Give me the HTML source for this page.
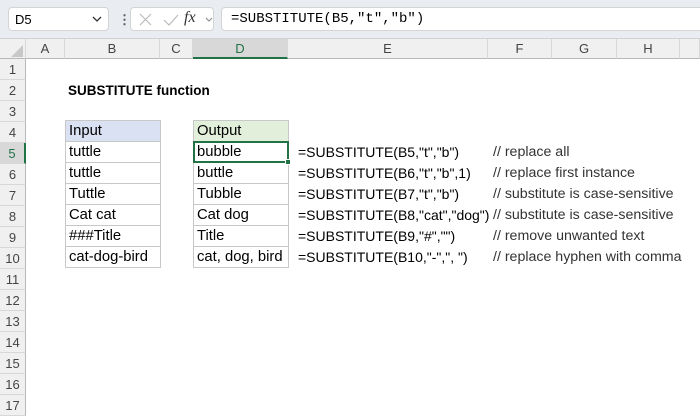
<!DOCTYPE html>
<html><head><style>
*{margin:0;padding:0;box-sizing:border-box}
body{width:700px;height:400px;overflow:hidden;background:#fff;font-family:"Liberation Sans",Arial,sans-serif;position:relative}
.bar{position:absolute;left:0;top:0;width:700px;height:39px;background:#e9edf2;border-bottom:1px solid #d0d0d0}
.box{position:absolute;background:#fff;border:1px solid #d4d4d4;border-radius:4px}
.ch{position:absolute;top:39px;height:20px;background:#f0f0f0;border-bottom:1px solid #b8b8b8;border-right:1px solid #d8d8d8;font-size:13px;color:#444;text-align:center;line-height:20px}
.rh{position:absolute;left:0;width:26px;height:21px;background:#f0f0f0;border-right:1px solid #b8b8b8;border-bottom:1px solid #d8d8d8;font-size:13px;color:#444;text-align:center;line-height:21px}
.c{position:absolute;height:22px;font-size:14.8px;line-height:22px;padding-left:3px;color:#000;white-space:nowrap}
.f{font-size:14px}
.m{font-size:14.2px;color:#333}
.b{border:1px solid #c8c8c8;line-height:21px}
</style></head><body>
<div class="bar"></div>
<div class="box" style="left:8px;top:7px;width:101px;height:24px"></div>
<div style="position:absolute;left:15px;top:12px;font-size:13px">D5</div>
<svg style="position:absolute;left:92px;top:16px" width="10" height="6"><path d="M1 1L5 5L9 1" fill="none" stroke="#333" stroke-width="1.3"/></svg>
<div style="position:absolute;left:118px;top:12px;font-size:13px;color:#555;font-weight:bold">⋮</div>
<div class="box" style="left:130px;top:7px;width:84px;height:24px"></div>
<svg style="position:absolute;left:136px;top:12px" width="80" height="16"><path d="M4 2L15 13M15 2L4 13" stroke="#bbb" stroke-width="1.2"/><path d="M28 8L33 13L42 3" fill="none" stroke="#bbb" stroke-width="1.2"/><path d="M70 6L73 9L76 6" fill="none" stroke="#888" stroke-width="1"/></svg>
<div style="position:absolute;left:184px;top:9px;font-family:'Liberation Serif',serif;font-style:italic;font-size:16px;color:#333">fx</div>
<div class="box" style="left:221px;top:7px;width:485px;height:24px"></div>
<div style="position:absolute;left:231px;top:11px;font-family:'Liberation Mono',monospace;font-size:14px">=SUBSTITUTE(B5,"t","b")</div>
<div class="ch" style="left:0;width:26px"></div>
<svg style="position:absolute;left:10px;top:44px" width="14" height="14"><path d="M13 1L13 13L1 13Z" fill="#c8c8c8"/></svg>
<div class="ch" style="left:26px;width:39px">A</div>
<div class="ch" style="left:65px;width:95px">B</div>
<div class="ch" style="left:160px;width:33px">C</div>
<div class="ch" style="left:193px;width:95px;background:#d8d8d8;border-bottom:2px solid #217346;color:#217346">D</div>
<div class="ch" style="left:288px;width:200px">E</div>
<div class="ch" style="left:488px;width:64px">F</div>
<div class="ch" style="left:552px;width:65px">G</div>
<div class="ch" style="left:617px;width:63px">H</div>
<div class="ch" style="left:680px;width:20px"></div>
<div class="rh" style="top:59px">1</div><div class="rh" style="top:80px">2</div><div class="rh" style="top:101px">3</div><div class="rh" style="top:122px">4</div>
<div class="rh" style="top:143px;background:#d8d8d8;color:#217346;border-right:2px solid #217346">5</div>
<div class="rh" style="top:164px">6</div><div class="rh" style="top:185px">7</div><div class="rh" style="top:206px">8</div><div class="rh" style="top:227px">9</div><div class="rh" style="top:248px">10</div><div class="rh" style="top:269px">11</div><div class="rh" style="top:290px">12</div><div class="rh" style="top:311px">13</div><div class="rh" style="top:332px">14</div><div class="rh" style="top:353px">15</div><div class="rh" style="top:374px">16</div><div class="rh" style="top:395px">17</div>
<div class="c" style="left:65px;top:80px;font-weight:bold;font-size:13.5px">SUBSTITUTE function</div>

<div class="c b" style="left:65px;top:120px;width:96px;background:#d9e1f2">Input</div>
<div class="c b" style="left:65px;top:141px;width:96px">tuttle</div>
<div class="c b" style="left:65px;top:162px;width:96px">tuttle</div>
<div class="c b" style="left:65px;top:183px;width:96px">Tuttle</div>
<div class="c b" style="left:65px;top:204px;width:96px">Cat cat</div>
<div class="c b" style="left:65px;top:225px;width:96px">###Title</div>
<div class="c b" style="left:65px;top:246px;width:96px">cat-dog-bird</div>

<div class="c b" style="left:193px;top:120px;width:96px;background:#e2efda">Output</div>
<div class="c b" style="left:193px;top:141px;width:96px">bubble</div>
<div class="c b" style="left:193px;top:162px;width:96px">buttle</div>
<div class="c b" style="left:193px;top:183px;width:96px">Tubble</div>
<div class="c b" style="left:193px;top:204px;width:96px">Cat dog</div>
<div class="c b" style="left:193px;top:225px;width:96px">Title</div>
<div class="c b" style="left:193px;top:246px;width:96px">cat, dog, bird</div>
<div style="position:absolute;left:193px;top:141px;width:96px;height:22px;border:2px solid #217346"></div>
<div style="position:absolute;left:285px;top:159px;width:6px;height:6px;background:#217346;border:1px solid #fff"></div>

<div class="c f" style="left:295px;top:141px">=SUBSTITUTE(B5,"t","b")</div>
<div class="c f" style="left:295px;top:162px">=SUBSTITUTE(B6,"t","b",1)</div>
<div class="c f" style="left:295px;top:183px">=SUBSTITUTE(B7,"t","b")</div>
<div class="c f" style="left:295px;top:204px">=SUBSTITUTE(B8,"cat","dog")</div>
<div class="c f" style="left:295px;top:225px">=SUBSTITUTE(B9,"#","")</div>
<div class="c f" style="left:295px;top:246px">=SUBSTITUTE(B10,"-",", ")</div>
<div class="c m" style="left:490px;top:141px">// replace all</div>
<div class="c m" style="left:490px;top:162px">// replace first instance</div>
<div class="c m" style="left:490px;top:183px">// substitute is case-sensitive</div>
<div class="c m" style="left:490px;top:204px">// substitute is case-sensitive</div>
<div class="c m" style="left:490px;top:225px">// remove unwanted text</div>
<div class="c m" style="left:490px;top:246px">// replace hyphen with comma</div>
</body></html>
